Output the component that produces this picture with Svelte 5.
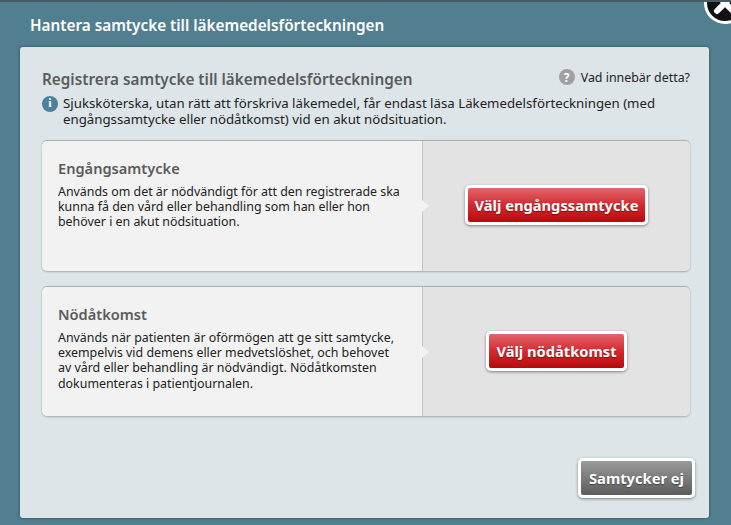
<script>
  const options = [
    {
      title: 'Engångsamtycke',
      lines: [
        'Används om det är nödvändigt för att den registrerade ska',
        'kunna få den vård eller behandling som han eller hon',
        'behöver i en akut nödsituation.'
      ],
      action: 'Välj engångssamtycke'
    },
    {
      title: 'Nödåtkomst',
      lines: [
        'Används när patienten är oförmögen att ge sitt samtycke,',
        'exempelvis vid demens eller medvetslöshet, och behovet',
        'av vård eller behandling är nödvändigt. Nödåtkomsten',
        'dokumenteras i patientjournalen.'
      ],
      action: 'Välj nödåtkomst'
    }
  ];
</script>

<div class="dialog">
  <button class="close" aria-label="Stäng">
    <svg viewBox="0 0 24 24" width="24" height="24">
      <path d="M4 4 L20 20 M20 4 L4 20" stroke="#fff" stroke-width="6" stroke-linecap="round" />
    </svg>
  </button>

  <h1>Hantera samtycke till läkemedelsförteckningen</h1>

  <div class="panel">
    <div class="panel-head">
      <h2>Registrera samtycke till läkemedelsförteckningen</h2>
      <span class="help"><span class="help-icon">?</span>Vad innebär detta?</span>
    </div>

    <div class="info">
      <span class="info-icon">i</span>
      <p>Sjuksköterska, utan rätt att förskriva läkemedel, får endast läsa Läkemedelsförteckningen (med<br />engångssamtycke eller nödåtkomst) vid en akut nödsituation.</p>
    </div>

    {#each options as option}
      <section class="card">
        <div class="card-text">
          <h3>{option.title}</h3>
          <p>
            {#each option.lines as line}
              {line}<br />
            {/each}
          </p>
        </div>
        <div class="card-action">
          <button class="btn red">{option.action}</button>
        </div>
      </section>
    {/each}

    <div class="footer">
      <button class="btn grey">Samtycker ej</button>
    </div>
  </div>
</div>

<style>
  :global(body) {
    background: #517f90;
    overflow: hidden;
  }

  .dialog {
    position: relative;
    box-sizing: border-box;
    width: 731px;
    height: 525px;
    padding: 47px 22px 7px 20px;
    background: #517f90;
    border-top: 2px solid #4a5a62;
    font-family: "Noto Sans", Tahoma, sans-serif;
    overflow: hidden;
  }

  h1 {
    position: absolute;
    top: 13px;
    left: 30px;
    margin: 0;
    color: #fff;
    font-size: 15.3px;
    line-height: 20px;
    font-weight: 600;
    white-space: nowrap;
  }

  .close {
    position: absolute;
    top: -20px;
    right: -15px;
    width: 42px;
    height: 42px;
    padding: 0;
    display: flex;
    align-items: center;
    justify-content: center;
    background: #111;
    border: 3px solid #fff;
    border-radius: 50%;
    box-sizing: border-box;
  }

  .panel {
    box-sizing: border-box;
    height: 471px;
    margin-top: -2px;
    padding: 22px 19px 0 22px;
    background: #dde5e8;
    border-radius: 3px;
    box-shadow: 0 0 3px rgba(30, 50, 60, 0.7);
  }

  .panel-head {
    display: flex;
    justify-content: space-between;
    align-items: center;
    height: 20px;
  }

  h2 {
    margin: 0;
    color: #5b5b5b;
    font-size: 15.3px;
    font-weight: 600;
  }

  .help {
    display: flex;
    align-items: center;
    gap: 6px;
    margin-bottom: 4px;
    font-size: 12.4px;
    color: #222;
  }

  .help-icon,
  .info-icon {
    display: inline-flex;
    align-items: center;
    justify-content: center;
    width: 16px;
    height: 16px;
    border-radius: 50%;
    color: #fff;
    font-size: 12px;
    font-weight: 700;
    flex: none;
  }

  .help-icon {
    background: #a0a0a0;
  }

  .info-icon {
    background: #4d8099;
    font-family: "Liberation Serif", serif;
  }

  .info {
    display: flex;
    gap: 5px;
    margin-top: 7px;
    margin-bottom: 14px;
    color: #222;
    font-size: 13.25px;
    line-height: 15.5px;
  }

  .info p {
    margin: 0;
    white-space: nowrap;
  }

  .card {
    display: flex;
    height: 130px;
    margin-bottom: 16px;
    border-radius: 5px;
    box-shadow: 0 -1px 1px #a8acae, 0 1px 2px #a5a9ab;
    overflow: hidden;
  }

  .card:nth-of-type(2) {
    height: 129px;
  }

  .card-text {
    box-sizing: border-box;
    width: 380px;
    padding: 17px 16px;
    background: #f2f2f2;
  }

  h3 {
    margin: 0 0 6px;
    color: #5b5b5b;
    font-size: 14.6px;
    line-height: 20px;
    font-weight: 600;
  }

  .card-text p {
    margin: 0;
    color: #222;
    font-size: 12.4px;
    line-height: 15.2px;
    white-space: nowrap;
  }

  .card-action {
    position: relative;
    flex: 1;
    display: flex;
    align-items: center;
    justify-content: center;
    padding-bottom: 2px;
    background: #e3e3e3;
    border-left: 1px solid #bfc3c4;
  }

  .card-action::before {
    content: "";
    position: absolute;
    left: -1px;
    top: 50%;
    margin-top: -6px;
    border-left: 7px solid #f2f2f2;
    border-top: 6px solid transparent;
    border-bottom: 6px solid transparent;
  }

  .btn {
    padding: 0 7px;
    height: 40px;
    box-sizing: border-box;
    border: 3px solid #fff;
    border-radius: 5px;
    color: #fff;
    font-family: inherit;
    font-size: 14.7px;
    font-weight: 700;
    white-space: nowrap;
    text-shadow: 0 1px 1px rgba(0, 0, 0, 0.4);
    box-shadow: 0 1px 3px rgba(0, 0, 0, 0.45);
  }

  .red {
    background: linear-gradient(#e2666c, #d32a2e 50%, #b80a0e);
  }

  .grey {
    padding: 0 8px;
    background: linear-gradient(#9a9a9a, #5c5c5c);
  }

  .footer {
    display: flex;
    justify-content: flex-end;
    margin-top: 42px;
    margin-right: -5px;
  }
</style>
